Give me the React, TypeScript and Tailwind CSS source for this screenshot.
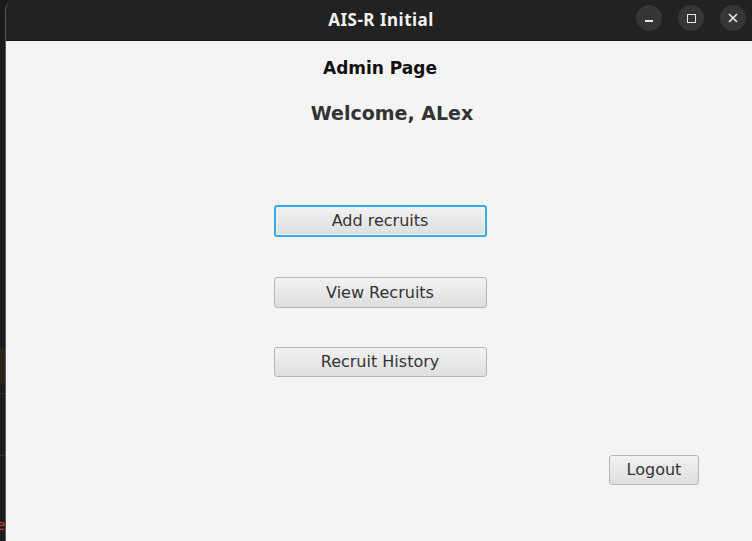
import React from "react";

function Btn({ label, focused, className }: { label: string; focused?: boolean; className?: string }) {
  return (
    <div
      className={
        "flex items-center justify-center rounded-[3px] bg-gradient-to-b from-[#f2f2f2] to-[#dedede] text-[16px] text-[#333] " +
        (focused
          ? "border-2 border-[#3aa8e2] shadow-[inset_0_0_0_1px_#e8f4fb] "
          : "border border-[#b5b5b5] ") +
        (className || "")
      }
      style={{ fontFamily: '"DejaVu Sans", sans-serif' }}
    >
      {label}
    </div>
  );
}

export default function App() {
  return (
    <div className="w-[752px] h-[541px] flex bg-[#1c1c1e] overflow-hidden">
      <div className="w-[5px] h-full flex flex-col bg-[#1b1b1d]">
        <div className="h-[348px]" />
        <div className="h-[36px] bg-[#2a2418]" />
        <div className="h-[9px]" />
        <div className="h-px bg-[#333]" />
        <div className="h-[61px]" />
        <div className="h-px bg-[#333]" />
        <div className="flex-1" />
        <div className="h-[16px] overflow-hidden relative">
          <span className="absolute right-0 top-[-4px] text-[14px] text-[#d23b3b]" style={{ fontFamily: '"DejaVu Sans", sans-serif' }}>e</span>
        </div>
        <div className="h-[6px]" />
      </div>
      <div className="flex-1 flex flex-col rounded-tl-[10px] overflow-hidden border-l border-[#5a5a5a]">
        <div className="h-[41px] bg-[#222222] flex items-center relative border-b border-[#161616]">
          <div
            className="flex-1 text-center text-[17px] tracking-[0.5px] font-bold text-[#f2f2f2] pl-[4px]"
            style={{ fontFamily: '"Noto Sans", sans-serif' }}
          >
            AIS-R Initial
          </div>
          <div className="absolute right-[6px] top-[5px] flex gap-[16px]">
            <div className="w-[26px] h-[26px] rounded-full bg-[#363636] flex items-center justify-center">
              <div className="w-[8px] h-[1.5px] bg-[#e8e8e8] mt-[6px]" />
            </div>
            <div className="w-[26px] h-[26px] rounded-full bg-[#363636] flex items-center justify-center">
              <div className="w-[9px] h-[9px] border-[1.5px] border-[#e8e8e8]" />
            </div>
            <div className="w-[26px] h-[26px] rounded-full bg-[#363636] flex items-center justify-center">
              <svg width="10" height="10" viewBox="0 0 10 10">
                <path d="M1 1 L9 9 M9 1 L1 9" stroke="#eaeaea" strokeWidth="1.6" />
              </svg>
            </div>
          </div>
        </div>
        <div className="flex-1 bg-[#f4f4f4] flex flex-col items-center pl-[2px] relative">
          <div
            className="mt-[16px] text-[17px] font-bold text-[#111] leading-[22px]"
            style={{ fontFamily: '"DejaVu Sans", sans-serif' }}
          >
            Admin Page
          </div>
          <div
            className="mt-[22px] ml-[24px] text-[19px] font-bold text-[#333] leading-[24px]"
            style={{ fontFamily: '"DejaVu Sans", sans-serif' }}
          >
            Welcome, ALex
          </div>
          <Btn label="Add recruits" focused className="mt-[80px] w-[213px] h-[32px]" />
          <Btn label="View Recruits" className="mt-[40px] w-[213px] h-[31px]" />
          <Btn label="Recruit History" className="mt-[39px] w-[213px] h-[30px]" />
          <div className="w-full flex justify-end pr-[53px] mt-[78px]">
            <Btn label="Logout" className="w-[90px] h-[30px]" />
          </div>
        </div>
      </div>
    </div>
  );
}
